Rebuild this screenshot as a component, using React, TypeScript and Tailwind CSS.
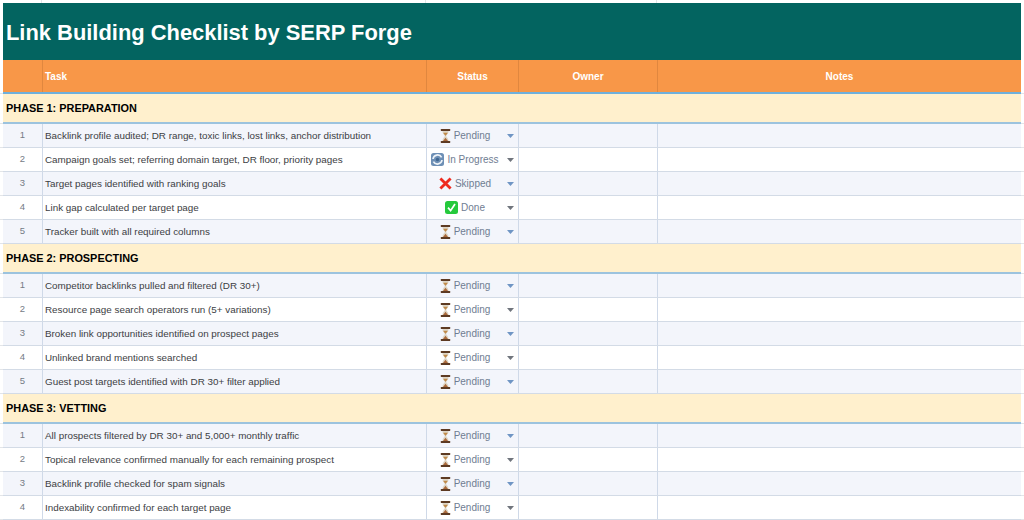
import type { ReactNode } from "react";

const FONT = "font-['Liberation_Sans',Arial,sans-serif]";

type Status = "Pending" | "In Progress" | "Skipped" | "Done";

interface Phase {
    title: string;
    rows: { task: string; status: Status }[];
}

const phases: Phase[] = [
    {
        title: "PHASE 1: PREPARATION",
        rows: [
            { task: "Backlink profile audited; DR range, toxic links, lost links, anchor distribution", status: "Pending" },
            { task: "Campaign goals set; referring domain target, DR floor, priority pages", status: "In Progress" },
            { task: "Target pages identified with ranking goals", status: "Skipped" },
            { task: "Link gap calculated per target page", status: "Done" },
            { task: "Tracker built with all required columns", status: "Pending" },
        ],
    },
    {
        title: "PHASE 2: PROSPECTING",
        rows: [
            { task: "Competitor backlinks pulled and filtered (DR 30+)", status: "Pending" },
            { task: "Resource page search operators run (5+ variations)", status: "Pending" },
            { task: "Broken link opportunities identified on prospect pages", status: "Pending" },
            { task: "Unlinked brand mentions searched", status: "Pending" },
            { task: "Guest post targets identified with DR 30+ filter applied", status: "Pending" },
        ],
    },
    {
        title: "PHASE 3: VETTING",
        rows: [
            { task: "All prospects filtered by DR 30+ and 5,000+ monthly traffic", status: "Pending" },
            { task: "Topical relevance confirmed manually for each remaining prospect", status: "Pending" },
            { task: "Backlink profile checked for spam signals", status: "Pending" },
            { task: "Indexability confirmed for each target page", status: "Pending" },
        ],
    },
];

const Hourglass = () => (
    <svg width="11" height="14" viewBox="0 0 11 14" className="shrink-0">
        <rect x="0.8" y="0" width="9.4" height="2" rx="0.6" fill="#5d3a22" />
        <rect x="0.8" y="12" width="9.4" height="2" rx="0.6" fill="#5d3a22" />
        <path d="M2.4 2 H8.6 C8.6 5 6.2 6 6.2 7 C6.2 8 8.6 9 8.6 12 H2.4 C2.4 9 4.8 8 4.8 7 C4.8 6 2.4 5 2.4 2 Z" fill="#ded6c6" />
        <path d="M3.3 3.8 H7.7 C7.3 5.2 5.9 5.9 5.5 6.9 C5.1 5.9 3.7 5.2 3.3 3.8 Z" fill="#c08a4a" />
        <path d="M5.5 8.8 L8 12 H3 Z" fill="#a9683a" />
    </svg>
);

const Progress = () => (
    <svg width="13" height="13" viewBox="0 0 13 13" className="shrink-0">
        <rect width="13" height="13" rx="2.5" fill="#6d8fb5" />
        <path d="M2 6 A4.6 4.6 0 0 1 10.6 4.4" fill="none" stroke="#eef3f8" strokeWidth="1.7" />
        <path d="M11 7 A4.6 4.6 0 0 1 2.4 8.6" fill="none" stroke="#eef3f8" strokeWidth="1.7" />
        <circle cx="6.5" cy="6.5" r="1.7" fill="#3f6690" />
    </svg>
);

const Cross = () => (
    <svg width="13" height="13" viewBox="0 0 13 13" className="shrink-0">
        <path d="M1.4 1.4 L11.6 11.6 M11.6 1.4 L1.4 11.6" stroke="#ee2a1e" strokeWidth="2.8" />
    </svg>
);

const Check = () => (
    <svg width="13" height="13" viewBox="0 0 13 13" className="shrink-0">
        <rect width="13" height="13" rx="2.5" fill="#25c93c" />
        <path d="M3 6.6 L5.6 9.6 L10 3" fill="none" stroke="#fff" strokeWidth="1.7" />
    </svg>
);

const statusIcon = (status: Status) => {
    if (status === "In Progress") return <Progress />;
    if (status === "Skipped") return <Cross />;
    if (status === "Done") return <Check />;
    return <Hourglass />;
};

// the sheet's own faint grid shows in the 3px either side of the table
const Band = ({ children }: { children: ReactNode }) => (
    <div className="flex">
        <div className="w-[3px] shrink-0 border-b border-[#e3e5e8]" />
        <div className="w-[1018px] shrink-0">{children}</div>
        <div className="w-[3px] shrink-0 border-b border-[#e3e5e8]" />
    </div>
);

const TaskRow = ({ index, task, status }: { index: number; task: string; status: Status }) => {
    const striped = index % 2 === 0;
    return (
        <Band>
            <div className={`flex h-6 border-b border-[#d3dbe6] ${striped ? "bg-[#f3f5fb]" : "bg-white"}`}>
                <div className="flex w-[40px] shrink-0 items-center justify-center border-r border-[#cfd9e8] text-[9.5px] text-[#757b85]">
                    {index + 1}
                </div>
                <div className="flex w-[384px] shrink-0 items-center truncate border-r border-[#cfd9e8] pl-[2px] pt-[1px] text-[9.85px] text-[#3c4043]">
                    {task}
                </div>
                <div className="flex w-[92px] shrink-0 items-center border-r border-[#cfd9e8] pr-[4px] text-[10px] text-[#6f7d92]">
                    <div className="flex flex-1 items-center justify-center gap-[3px]">
                        {statusIcon(status)}
                        <span>{status}</span>
                    </div>
                    <svg width="7" height="4" viewBox="0 0 7 4" className="ml-[4px] shrink-0">
                        <path d="M0 0 H7 L3.5 4 Z" fill={striped ? "#6f95c4" : "#70757d"} />
                    </svg>
                </div>
                <div className="w-[139px] shrink-0 border-r border-[#cfd9e8]" />
                <div className="flex-1" />
            </div>
        </Band>
    );
};

export default function App() {
    return (
        <div className={`h-[520px] w-[1024px] overflow-hidden bg-white ${FONT}`}>
            <div className="flex h-[3px]">
                <div className="w-[42px] shrink-0 border-r border-[#e3e5e8]" />
                <div className="w-[384px] shrink-0 border-r border-[#e3e5e8]" />
                <div className="w-[231px] shrink-0 border-r border-[#e3e5e8]" />
            </div>
            <Band>
                <div className="flex h-[57px] items-center bg-[#036460] pl-[3px] pt-[3px] text-[21.9px] font-bold text-white">
                    Link Building Checklist by SERP Forge
                </div>
                <div className="flex h-[34px] border-b-2 border-[#6fb0dc] bg-[#f89748] text-[10px] font-bold text-white">
                    <div className="w-[40px] shrink-0 border-r border-[#e0873f]" />
                    <div className="flex w-[384px] shrink-0 items-center border-r border-[#e0873f] pl-[2px]">Task</div>
                    <div className="flex w-[92px] shrink-0 items-center justify-center border-r border-[#e0873f]">Status</div>
                    <div className="flex w-[139px] shrink-0 items-center justify-center border-r border-[#e0873f]">Owner</div>
                    <div className="flex flex-1 items-center justify-center">Notes</div>
                </div>
            </Band>
            {phases.map((phase) => (
                <div key={phase.title}>
                    <Band>
                        <div className="flex h-[30px] items-center border-b-2 border-[#9cc3de] bg-[#fff0cd] pl-[3px] pt-[1px] text-[10.9px] font-bold text-black">
                            {phase.title}
                        </div>
                    </Band>
                    {phase.rows.map((row, index) => (
                        <TaskRow key={row.task} index={index} task={row.task} status={row.status} />
                    ))}
                </div>
            ))}
        </div>
    );
}
